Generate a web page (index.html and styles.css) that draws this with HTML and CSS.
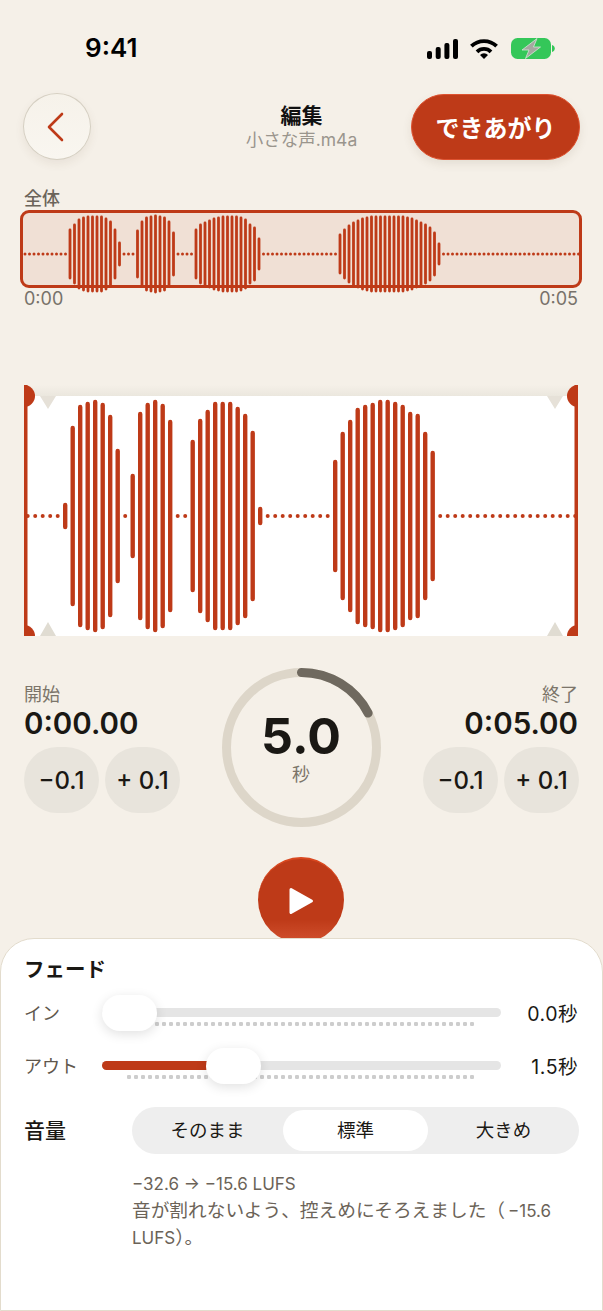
FILE: index.html
```html
<!DOCTYPE html>
<html lang="ja">
<head>
    <meta charset="UTF-8">
    <meta name="viewport" content="width=device-width, initial-scale=1.0">
    <title>編集</title>
    <link rel="stylesheet" href="styles.css">
</head>
<body>

    <div class="status-bar">
        <span class="clock">9:41</span>
        <div class="status-icons">
            <svg class="signal" width="31" height="20" viewBox="0 0 31 20">
                <rect x="0" y="12" width="5" height="8" rx="2"/>
                <rect x="8.7" y="8" width="5" height="12" rx="2"/>
                <rect x="17.4" y="4" width="5" height="16" rx="2"/>
                <rect x="26" y="0" width="5" height="20" rx="2"/>
            </svg>
            <svg width="30" height="21" viewBox="0 0 30 21">
                <path d="M2.4 8.2a18 18 0 0 1 25.2 0" fill="none" stroke="#000" stroke-width="3.8"/>
                <path d="M8 13.8a10 10 0 0 1 14 0" fill="none" stroke="#000" stroke-width="3.8"/>
                <path d="M11 17a5.6 5.6 0 0 1 8 0l-4 4z"/>
            </svg>
            <svg width="44" height="21" viewBox="0 0 44 21">
                <rect x="0" y="0" width="40" height="21" rx="6.5" fill="#34c759"/>
                <path d="M41 7c1.600.4 2.800 1.800 2.800 3.500S42.600 13.600 41 14z" fill="#34c759"/>
                <path d="M26 0.500 11 12h7L14.500 20.500 29.500 9h-7z" fill="#a6a7a1" stroke="#d2ead6" stroke-width="0.8"/>
            </svg>
        </div>
    </div>

    <header class="top-bar">
        <button class="back-btn">
            <svg class="back-icon" width="18" height="30" viewBox="0 0 18 30">
                <path d="M15 2 2 15l13 13" fill="none" stroke="#be3a18" stroke-width="2.600" stroke-linecap="round" stroke-linejoin="round"/>
            </svg>
        </button>
        <div class="title-box">
            <div class="title">編集</div>
            <div class="file-name">小さな声.m4a</div>
        </div>
        <button class="done-btn">できあがり</button>
    </header>

    <section class="overview">
        <div class="overview-label">全体</div>
        <div class="overview-box">
            <svg id="overview-wave" class="overview-wave" width="562" height="90" viewBox="0 0 562 90"></svg>
        </div>
        <div class="overview-times">
            <span>0:00</span>
            <span>0:05</span>
        </div>
    </section>

    <section class="editor">
        <svg id="main-wave" width="554" height="251" viewBox="0 0 554 251">
            <defs>
                <linearGradient id="top-shade" x1="0" y1="0" x2="0" y2="1">
                    <stop offset="0" stop-color="#f5f0e8"/>
                    <stop offset="1" stop-color="#ebe7de"/>
                </linearGradient>
            </defs>
            <rect x="8" y="0" width="538" height="11" fill="url(#top-shade)"/>
            <rect x="0" y="11" width="554" height="240" fill="#fff"/>
            <path d="M16 11h16l-8 13z M523 11h16l-8 13z" fill="#e6e1d8"/>
            <path d="M16 251h16l-8-14z M523 251h16l-8-14z" fill="#e0dcd2"/>
            <g id="main-bars"></g>
            <g fill="#be3a18">
                <rect x="0" y="0" width="3.500" height="251"/>
                <rect x="550.500" y="0" width="3.500" height="251"/>
                <path d="M0 0a11 11 0 0 1 0 22z"/>
                <path d="M554 0a11 11 0 0 0 0 22z"/>
                <path d="M0 240a11 11 0 0 1 11 11H0z"/>
                <path d="M554 240a11 11 0 0 0-11 11h11z"/>
            </g>
        </svg>
    </section>

    <section class="trim-row">
        <div class="trim-side">
            <div class="trim-label">開始</div>
            <div class="trim-time">0:00.00</div>
            <div class="nudge-row">
                <button class="nudge-btn">−0.1</button>
                <button class="nudge-btn">+ 0.1</button>
            </div>
        </div>

        <div class="ring">
            <svg width="159" height="159" viewBox="0 0 159 159">
                <circle cx="79.500" cy="79.500" r="75" fill="none" stroke="#ddd6c9" stroke-width="9"/>
                <path d="M79.500 4.500A75 75 0 0 1 146.100 45.100" fill="none" stroke="#6f695f" stroke-width="9" stroke-linecap="round"/>
            </svg>
            <div class="ring-text">
                <div class="ring-value">5.0</div>
                <div class="ring-unit">秒</div>
            </div>
        </div>

        <div class="trim-side trim-side-right">
            <div class="trim-label">終了</div>
            <div class="trim-time">0:05.00</div>
            <div class="nudge-row">
                <button class="nudge-btn">−0.1</button>
                <button class="nudge-btn">+ 0.1</button>
            </div>
        </div>
    </section>

    <div class="play-row">
        <button class="play-btn">
            <svg width="26" height="28" viewBox="0 0 26 28">
                <path d="M3 2.500 23.500 14 3 25.500z" fill="#fff" stroke="#fff" stroke-width="3" stroke-linejoin="round"/>
            </svg>
        </button>
    </div>

    <section class="sheet">
        <h2 class="sheet-title">フェード</h2>

        <div class="fade-row">
            <span class="fade-name">イン</span>
            <div class="slider">
                <div class="slider-track"></div>
                <div class="slider-dots"></div>
                <div class="slider-thumb thumb-in"></div>
            </div>
            <span class="fade-value">0.0秒</span>
        </div>

        <div class="fade-row">
            <span class="fade-name">アウト</span>
            <div class="slider">
                <div class="slider-track"><div class="slider-fill"></div></div>
                <div class="slider-dots"></div>
                <div class="slider-thumb thumb-out"></div>
            </div>
            <span class="fade-value">1.5秒</span>
        </div>

        <div class="volume-row">
            <span class="volume-name">音量</span>
            <div class="segments">
                <button class="segment">そのまま</button>
                <button class="segment active">標準</button>
                <button class="segment">大きめ</button>
            </div>
        </div>

        <p class="volume-note"><span class="note-num">−32.6 → −15.6 LUFS</span><br>音が割れないよう、控えめにそろえました（<span class="note-num note-gap">−15.6</span> <span class="note-num">LUFS</span>）。</p>
    </section>

    <script src="script.js"></script>
</body>
</html>
```

FILE: styles.css
```css
* { box-sizing: border-box; }
html, body { margin: 0; padding: 0; }
body {
    width: 603px;
    height: 1311px;
    overflow: hidden;
    background-color: #f5f0e8;
    color: #1a1814;
    font-family: Inter, "Noto Sans CJK JP", sans-serif;
}
button { font-family: inherit; border: none; padding: 0; }
svg { display: block; }

.status-bar { height: 93px; padding: 33px 48px 0 85px; display: flex; justify-content: space-between; align-items: flex-start; }
.clock { font-size: 26px; font-weight: 600; line-height: 30px; color: #000; }
.status-icons { display: flex; align-items: center; gap: 12px; padding-top: 5px; }
.signal { margin-right: -1px; }

.top-bar { height: 67px; padding: 0 23px; display: grid; grid-template-columns: 1fr auto 1fr; align-items: center; }
.back-btn {
    width: 68px; height: 67px; border-radius: 50%;
    background: linear-gradient(180deg, #f6f2ea, #f9f6f0);
    border: 1px solid #d5cfc2;
    box-shadow: 0 4px 10px rgba(90, 70, 40, 0.08);
    display: flex; align-items: center; justify-content: center;
}
.back-icon { margin-right: 3px; }
.title-box { text-align: center; padding-top: 2px; }
.title { font-size: 21px; font-weight: 700; line-height: 24px; color: #111; }
.file-name { font-size: 17.5px; line-height: 23px; color: #9a958d; }
.done-btn {
    justify-self: end; width: 169px; height: 66px; border-radius: 33px;
    background-color: #be3a18; border: 1px solid #de5230;
    box-shadow: 0 4px 10px rgba(90, 70, 40, 0.1);
    color: #fff; font-size: 24px; font-weight: 700;
}

.overview { padding: 27px 21px 0 20px; }
.overview-label { padding-left: 4px; font-size: 18px; font-weight: 500; line-height: 23px; color: #6b645a; }
.overview-box { position: relative; height: 78px; border: 3px solid #be3a18; border-radius: 9px; background-color: #f0e0d5; }
.overview-wave { position: absolute; left: -3px; top: -3px; overflow: visible; }
.overview-times { display: flex; justify-content: space-between; padding: 1px 4px 0; font-size: 18px; line-height: 20px; color: #78726a; }

.editor { margin: 76px 25px 0 24px; }

.trim-row { margin-top: 32px; padding: 0 24px; display: flex; justify-content: space-between; height: 159px; }
.trim-side { width: 156px; padding-top: 16px; }
.trim-side-right { text-align: right; }
.trim-side-right .trim-label, .trim-side-right .trim-time { padding-right: 1px; }
.trim-label { font-size: 18px; line-height: 22px; color: #7c756a; }
.trim-time { font-size: 29.5px; font-weight: 600; line-height: 36px; margin-top: -1px; white-space: nowrap; }
.nudge-row { display: flex; gap: 6px; margin-top: 6px; }
.nudge-btn { width: 75px; height: 66px; border-radius: 33px; background-color: #e8e4dc; color: #1a1814; font-size: 24px; font-weight: 500; }

.ring { width: 159px; height: 159px; display: grid; place-items: center; margin-left: -1px; }
.ring svg, .ring-text { grid-area: 1 / 1; }
.ring-text { text-align: center; padding-bottom: 3px; }
.ring-value { font-size: 50px; font-weight: 700; line-height: 60px; }
.ring-unit { font-size: 18px; line-height: 22px; color: #7c756a; margin-top: -2px; }

.play-row { margin-top: 30px; display: flex; justify-content: center; height: 81px; }
.play-btn {
    width: 86px; height: 86px; border-radius: 50%; margin-left: -1px;
    background: linear-gradient(180deg, #be3a18 0, #be3a18 72%, #d2512f 100%);
    border-top: 2px solid #d9481f;
    display: flex; align-items: center; justify-content: center;
}

.sheet {
    position: relative;
    height: 373px; padding: 18px 23px 0;
    background-color: #fff;
    border: 1px solid #e3dccd; border-radius: 34px 34px 0 0;
}
.sheet-title { margin: 0; font-size: 20.5px; font-weight: 700; line-height: 26px; color: #1a1814; }

.fade-row { display: flex; align-items: flex-start; height: 53px; margin-top: 12px; }
.fade-row + .fade-row { margin-top: 0; }
.fade-name { width: 78px; font-size: 18px; line-height: 24px; color: #5f574d; padding-top: 6.5px; }
.fade-value { margin-left: auto; padding-right: 1px; font-size: 19.5px; letter-spacing: 0.5px; line-height: 24px; color: #1a1814; padding-top: 6.5px; }
.slider { position: relative; width: 399px; height: 37px; }
.slider-track { margin-top: 13px; height: 9px; border-radius: 5px; background-color: #e5e5e5; overflow: hidden; }
.slider-fill { width: 110px; height: 9px; background-color: #be3a18; }
.slider-dots {
    margin: 5px 26px 0 25px; height: 4px;
    background: radial-gradient(circle at 2px 2px, #cdcdcd 2px, transparent 2.4px) repeat-x;
    background-size: 7px 4px;
}
.slider-thumb {
    position: absolute; top: 0; width: 55px; height: 36px; border-radius: 18px;
    background-color: #fff; box-shadow: 0 3px 12px rgba(0, 0, 0, 0.12);
}
.thumb-in { left: 0; }
.thumb-out { left: 104px; }

.volume-row { display: flex; align-items: center; margin-top: 6px; }
.volume-name { width: 108px; font-size: 21px; font-weight: 500; padding-bottom: 4px; }
.segments { width: 447px; height: 47px; padding: 3px; border-radius: 24px; background-color: #eeeeee; display: flex; }
.segment { flex: 1; border-radius: 21px; background: none; font-size: 18.5px; color: #1a1814; padding-bottom: 3px; }
.segment.active { background-color: #fff; margin: 0 3px; }

.volume-note { margin: 16px 0 0 108px; font-size: 18.7px; line-height: 27px; color: #6b6358; }
.note-num { font-size: 17px; line-height: 1; }
.note-gap { margin-left: 3px; }
```

FILE: script.js
```js
// bar heights above/below the centre line, 0 = just a dot
const RED = "#be3a18";

function addBar(svg, x, cy, amp, width) {
    let line = document.createElementNS("http://www.w3.org/2000/svg", "line");
    line.setAttribute("x1", x);
    line.setAttribute("x2", x);
    line.setAttribute("y1", cy - amp);
    line.setAttribute("y2", cy + amp);
    line.setAttribute("stroke", RED);
    line.setAttribute("stroke-width", width);
    line.setAttribute("stroke-linecap", "round");
    svg.appendChild(line);
}

function fillGroups(count, groups) {
    let amps = new Array(count).fill(0);
    groups.forEach(g => {
        g.amps.forEach((a, i) => { amps[g.start + i] = a; });
    });
    return amps;
}

const mainAmps = fillGroups(74, [
    { start: 5, amps: [11, 88, 109, 112, 114, 111, 99, 65] },
    { start: 14, amps: [40, 102, 111, 114, 110, 94] },
    { start: 22, amps: [74, 95, 104, 112, 112, 112, 107, 100, 83, 7] },
    { start: 41, amps: [54, 82, 94, 106, 109, 111, 114, 114, 112, 109, 102, 100, 82, 63] }
]);

const mainBars = document.getElementById("main-bars");
mainAmps.forEach((amp, i) => {
    addBar(mainBars, 3.7 + i * 7.5, 131, amp, amp ? 4.4 : 4);
});

const overviewAmps = fillGroups(124, [
    { start: 10, amps: [24, 29, 34, 36, 37, 37, 37, 37, 35, 32, 24, 11] },
    { start: 25, amps: [23, 32, 36, 37, 38, 37, 36, 32, 21] },
    { start: 38, amps: [24, 29, 31, 33, 35, 36, 37, 37, 37, 37, 36, 34, 29, 26, 15] },
    { start: 70, amps: [19, 24, 28, 31, 33, 35, 36, 37, 37, 37, 37, 37, 37, 37, 37, 36, 35, 33, 31, 29, 26, 21, 10] }
]);

const overview = document.getElementById("overview-wave");
overviewAmps.forEach((amp, i) => {
    addBar(overview, 5 + i * 4.5, 44, amp, amp ? 2.8 : 3);
});
```
